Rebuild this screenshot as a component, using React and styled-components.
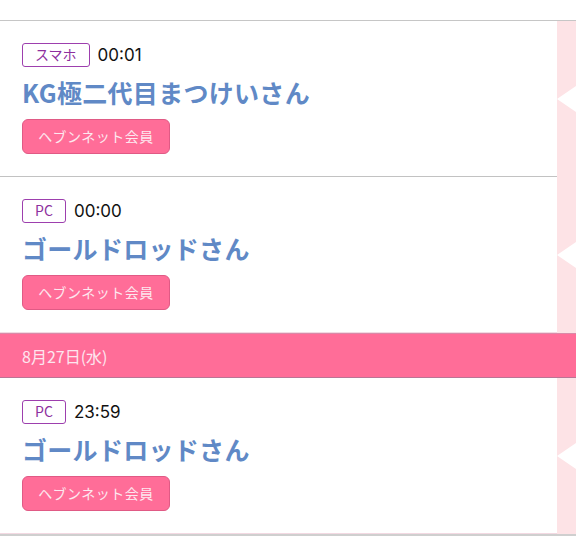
import React from "react";
import styled, { createGlobalStyle } from "styled-components";

const GlobalStyle = createGlobalStyle`
  html, body {
    margin: 0;
    padding: 0;
    background: #fff;
  }
  body {
    font-family: "Noto Sans CJK JP", "Noto Sans", sans-serif;
  }
`;

const Page = styled.div`
  width: 576px;
  padding-top: 20px;
`;

const List = styled.div`
  border-top: 1px solid #c6c6c6;
  border-bottom: 2px solid #cfcfcf;
`;

const Item = styled.div`
  display: flex;
  align-items: stretch;
`;

const Body = styled.div`
  flex: 1;
  padding: 22px;
  border-bottom: 1px solid ${(p) => (p.$last ? "#f3d9e2" : "#c2c2c2")};
  display: flex;
  flex-direction: column;
  align-items: flex-start;
`;

const Meta = styled.div`
  display: flex;
  align-items: center;
  gap: 8px;
  height: 24px;
`;

const Device = styled.span`
  box-sizing: border-box;
  height: 24px;
  min-width: 44px;
  padding: 0 12px;
  border: 1.5px solid #9d3fae;
  border-radius: 3px;
  color: #8e2f9e;
  font-size: 14px;
  line-height: 21px;
  text-align: center;
`;

const Time = styled.span`
  color: #111;
  font-family: Inter, "Noto Sans", sans-serif;
  font-size: 17px;
`;

const Name = styled.div`
  margin-top: 9px;
  color: #6089c6;
  font-size: 25px;
  font-weight: 700;
  line-height: 32px;
  letter-spacing: 0.3px;
`;

const Member = styled.span`
  box-sizing: border-box;
  margin-top: 11px;
  width: 148px;
  height: 35px;
  border: 1px solid #e05a85;
  border-radius: 6px;
  background: #ff6d98;
  color: #fde8ef;
  font-size: 14px;
  letter-spacing: 0.5px;
  line-height: 33px;
  text-align: center;
`;

const Strip = styled.div`
  width: 19px;
  background: #fde3e6;
  display: flex;
  align-items: center;
`;

const Notch = styled.span`
  width: 0;
  height: 0;
  border-top: 13px solid transparent;
  border-bottom: 13px solid transparent;
  border-right: 19px solid #fff;
`;

const DateBar = styled.div`
  box-sizing: border-box;
  height: 45px;
  padding-left: 22px;
  background: #ff6d98;
  border-top: 1px solid #d98aa8;
  border-bottom: 1px solid #b97595;
  color: #fde6ef;
  font-size: 16px;
  display: flex;
  align-items: center;
`;

const Entry = ({ device, time, name, last }) => (
  <Item>
    <Body $last={last}>
      <Meta>
        <Device>{device}</Device>
        <Time>{time}</Time>
      </Meta>
      <Name>{name}</Name>
      <Member>ヘブンネット会員</Member>
    </Body>
    <Strip>
      <Notch />
    </Strip>
  </Item>
);

export default function App() {
  return (
    <Page>
      <GlobalStyle />
      <List>
        <Entry device="スマホ" time="00:01" name="KG極二代目まつけいさん" />
        <Entry device="PC" time="00:00" name="ゴールドロッドさん" last />
        <DateBar>8月27日(水)</DateBar>
        <Entry device="PC" time="23:59" name="ゴールドロッドさん" last />
      </List>
    </Page>
  );
}
